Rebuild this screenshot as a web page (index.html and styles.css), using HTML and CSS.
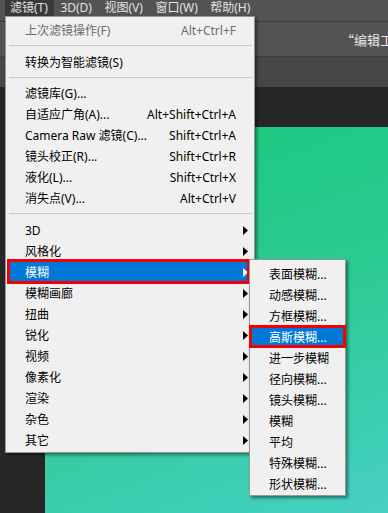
FILE: index.html
```html
<!DOCTYPE html>
<html lang="zh-CN">
<head>
<meta charset="utf-8">
<title>滤镜菜单</title>
<link rel="stylesheet" href="styles.css">
</head>
<body>
<div class="app">
  <div class="menubar">
    <span class="mb-item active">滤镜(T)</span>
    <span class="mb-item">3D(D)</span>
    <span class="mb-item">视图(V)</span>
    <span class="mb-item">窗口(W)</span>
    <span class="mb-item">帮助(H)</span>
  </div>
  <div class="optionsbar"><span class="doc-title">“编辑工具栏</span></div>
  <div class="tabbar"></div>
  <div class="workspace">
    <div class="toolstrip"></div>
    <div class="canvas-col">
      <div class="canvas-top"></div>
      <div class="canvas"></div>
    </div>
  </div>
</div>

<div class="menu main-menu">
  <div class="row disabled"><span class="label">上次滤镜操作(F)</span><span class="key">Alt+Ctrl+F</span><span class="arr"></span></div>
  <div class="sep"></div>
  <div class="row"><span class="label">转换为智能滤镜(S)</span><span class="arr"></span></div>
  <div class="sep sep-short"></div>
  <div class="row"><span class="label">滤镜库(G)...</span><span class="arr"></span></div>
  <div class="row"><span class="label">自适应广角(A)...</span><span class="key">Alt+Shift+Ctrl+A</span><span class="arr"></span></div>
  <div class="row"><span class="label">Camera Raw 滤镜(C)...</span><span class="key">Shift+Ctrl+A</span><span class="arr"></span></div>
  <div class="row"><span class="label">镜头校正(R)...</span><span class="key">Shift+Ctrl+R</span><span class="arr"></span></div>
  <div class="row"><span class="label">液化(L)...</span><span class="key">Shift+Ctrl+X</span><span class="arr"></span></div>
  <div class="row"><span class="label">消失点(V)...</span><span class="key">Alt+Ctrl+V</span><span class="arr"></span></div>
  <div class="sep"></div>
  <div class="row"><span class="label">3D</span><span class="arr"><svg width="5" height="9" viewBox="0 0 5 9"><polygon points="0,0 5,4.5 0,9"/></svg></span></div>
  <div class="row"><span class="label">风格化</span><span class="arr"><svg width="5" height="9" viewBox="0 0 5 9"><polygon points="0,0 5,4.5 0,9"/></svg></span></div>
  <div class="row hl"><span class="label">模糊</span><span class="arr"><svg width="5" height="9" viewBox="0 0 5 9"><polygon points="0,0 5,4.5 0,9"/></svg></span></div>
  <div class="row"><span class="label">模糊画廊</span><span class="arr"><svg width="5" height="9" viewBox="0 0 5 9"><polygon points="0,0 5,4.5 0,9"/></svg></span></div>
  <div class="row"><span class="label">扭曲</span><span class="arr"><svg width="5" height="9" viewBox="0 0 5 9"><polygon points="0,0 5,4.5 0,9"/></svg></span></div>
  <div class="row"><span class="label">锐化</span><span class="arr"><svg width="5" height="9" viewBox="0 0 5 9"><polygon points="0,0 5,4.5 0,9"/></svg></span></div>
  <div class="row"><span class="label">视频</span><span class="arr"><svg width="5" height="9" viewBox="0 0 5 9"><polygon points="0,0 5,4.5 0,9"/></svg></span></div>
  <div class="row"><span class="label">像素化</span><span class="arr"><svg width="5" height="9" viewBox="0 0 5 9"><polygon points="0,0 5,4.5 0,9"/></svg></span></div>
  <div class="row"><span class="label">渲染</span><span class="arr"><svg width="5" height="9" viewBox="0 0 5 9"><polygon points="0,0 5,4.5 0,9"/></svg></span></div>
  <div class="row"><span class="label">杂色</span><span class="arr"><svg width="5" height="9" viewBox="0 0 5 9"><polygon points="0,0 5,4.5 0,9"/></svg></span></div>
  <div class="row"><span class="label">其它</span><span class="arr"><svg width="5" height="9" viewBox="0 0 5 9"><polygon points="0,0 5,4.5 0,9"/></svg></span></div>
</div>

<div class="menu sub-menu">
  <div class="row">表面模糊...</div>
  <div class="row">动感模糊...</div>
  <div class="row">方框模糊...</div>
  <div class="row hl">高斯模糊...</div>
  <div class="row">进一步模糊</div>
  <div class="row">径向模糊...</div>
  <div class="row">镜头模糊...</div>
  <div class="row">模糊</div>
  <div class="row">平均</div>
  <div class="row">特殊模糊...</div>
  <div class="row">形状模糊...</div>
</div>
</body>
</html>
```

FILE: styles.css
```css
* { box-sizing: border-box; }

html, body {
  margin: 0;
  padding: 0;
}

body {
  width: 388px;
  height: 513px;
  overflow: hidden;
  position: relative;
  font-family: "Noto Sans", "Noto Sans CJK SC", sans-serif;
  font-size: 12px;
  background: #262626;
}

.app {
  display: flex;
  flex-direction: column;
  height: 513px;
}

.menubar {
  height: 22px;
  background: #535353;
  border-bottom: 1px solid #3d3d3d;
  display: flex;
  align-items: flex-start;
  padding-left: 5px;
  gap: 1.5px;
}

.mb-item {
  height: 16px;
  line-height: 16px;
  padding: 0 6px 0 5px;
  color: #e2e2e2;
  white-space: nowrap;
}

.mb-item.active {
  background: #393939;
}

.optionsbar {
  height: 35px;
  background: #535353;
  border-bottom: 1px solid #3d3d3d;
  display: flex;
  align-items: center;
  padding-left: 341px;
  white-space: nowrap;
  overflow: hidden;
}

.doc-title {
  color: #e6e6e6;
  font-family: "Noto Sans CJK SC", sans-serif;
  font-size: 13px;
  line-height: 16px;
  margin-top: 2px;
}

.tabbar {
  height: 30px;
  background: #474747;
}

.workspace {
  flex: 1;
  display: flex;
}

.toolstrip {
  width: 45px;
  background: #262626;
}

.canvas-col {
  flex: 1;
  display: flex;
  flex-direction: column;
}

.canvas-top {
  height: 40px;
  background: #262626;
}

.canvas {
  flex: 1;
  background: linear-gradient(160deg, #18c879 0%, #2ccb93 50%, #47d0c4 100%);
}

/* menus */
.menu {
  position: absolute;
  background: #f0f0f0;
  border: 1px solid #979797;
  box-shadow: 2px 2px 3px rgba(0, 0, 0, 0.45);
  color: #000;
}

.main-menu {
  top: 16px;
  left: 5px;
  width: 250px;
  padding: 2px 0;
  z-index: 2;
}

.sub-menu {
  top: 259px;
  left: 249px;
  width: 97px;
  padding: 3px 0 1px;
  z-index: 3;
}

.row {
  height: 21px;
  line-height: 19px;
  padding-top: 2px;
  display: flex;
  align-items: center;
  white-space: nowrap;
}

.main-menu .row {
  margin: 0 6px 0 3px;
  padding-left: 16px;
}

.sub-menu .row {
  padding-left: 19px;
}

.label {
  flex: 1;
}

.key {
  text-align: right;
}

.arr {
  width: 12px;
  height: 19px;
  display: flex;
  align-items: center;
  justify-content: flex-end;
}

.arr svg {
  display: block;
  fill: #000;
}

.row.disabled {
  color: #6d6d6d;
}

.row.hl {
  background: #0078d7;
  color: #fff;
  outline: 3px solid #f50000;
  outline-offset: -1px;
}

.sub-menu .row.hl {
  outline-offset: -2px;
}

.row.hl .arr svg {
  fill: #fff;
}

.sep {
  height: 1px;
  background: #c8c8c8;
  margin: 5px 2px 5px 3px;
}

.sep-short {
  margin-bottom: 4px;
}
```
